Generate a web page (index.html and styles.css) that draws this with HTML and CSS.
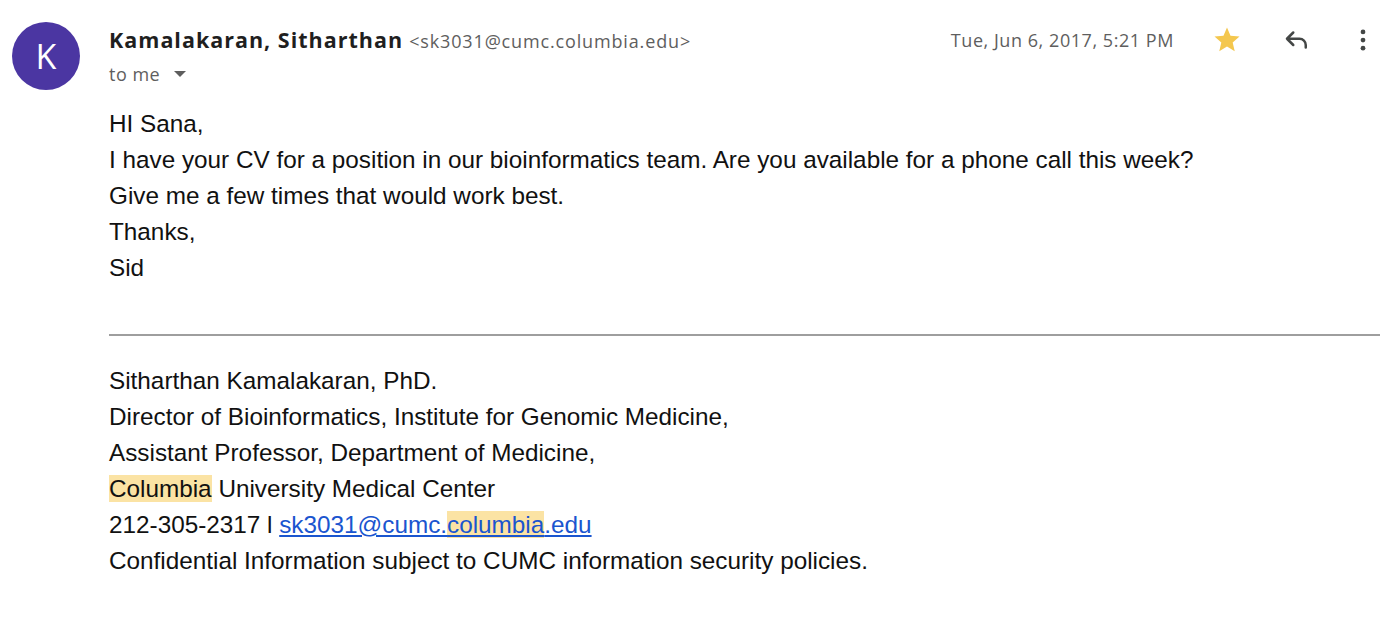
FILE: index.html
```html
<!DOCTYPE html>
<html>
<head>
<meta charset="utf-8">
<link rel="stylesheet" href="styles.css">
</head>
<body>
<div class="message">
  <div class="avatar">K</div>
  <div class="main">
    <div class="header">
      <div class="sender">
        <div class="from"><span class="name">Kamalakaran, Sitharthan</span> <span class="addr">&lt;sk3031@cumc.columbia.edu&gt;</span></div>
        <div class="to">to me <span class="caret"></span></div>
      </div>
      <div class="meta">
        <span class="date">Tue, Jun 6, 2017, 5:21 PM</span>
        <svg class="icon star" width="30" height="30" viewBox="0 0 24 24"><path fill="#f4c74e" d="M12 17.27L18.18 21l-1.64-7.03L22 9.24l-7.19-.61L12 2 9.19 8.63 2 9.24l5.46 4.73L5.82 21z"/></svg>
        <svg class="icon reply" width="30" height="30" viewBox="0 0 24 24"><path fill="none" stroke="#444746" stroke-width="2" stroke-linecap="round" stroke-linejoin="round" d="M9 6L4 11l5 5M4 11h10a5 5 0 0 1 5 5v2"/></svg>
        <svg class="icon more" width="30" height="30" viewBox="0 0 24 24"><circle cx="12" cy="5.5" r="1.9" fill="#444746"/><circle cx="12" cy="12" r="1.9" fill="#444746"/><circle cx="12" cy="18.5" r="1.9" fill="#444746"/></svg>
      </div>
    </div>
    <div class="body">
      <div>HI Sana,</div>
      <div>I have your CV for a position in our bioinformatics team. Are you available for a phone call this week?</div>
      <div>Give me a few times that would work best.</div>
      <div>Thanks,</div>
      <div>Sid</div>
      <hr class="rule">
      <div>Sitharthan Kamalakaran, PhD.</div>
      <div>Director of Bioinformatics, Institute for Genomic Medicine,</div>
      <div>Assistant Professor, Department of Medicine,</div>
      <div><span class="hl">Columbia</span> University Medical Center</div>
      <div>212-305-2317 l <a class="link" href="#">sk3031@cumc.<span class="hl">columbia</span>.edu</a></div>
      <div>Confidential Information subject to CUMC information security policies.</div>
    </div>
  </div>
</div>
</body>
</html>
```
FILE: styles.css
```css
html, body { margin: 0; padding: 0; background: #fff; }
body { width: 1394px; height: 628px; overflow: hidden; }
.message { display: flex; padding: 22px 0 0 12px; }
.avatar {
  width: 68px; height: 68px; border-radius: 50%;
  background: #4b36a2; color: #fff;
  display: flex; align-items: center; justify-content: center;
  font-family: "Open Sans", Roboto, sans-serif; font-size: 34px;
  flex: none;
}
.main { flex: 1; margin-left: 29px; margin-right: 14px; }
.header { display: flex; justify-content: space-between; align-items: flex-start; }
.from { font-family: "Open Sans", Roboto, sans-serif; line-height: 36px; height: 36px; white-space: nowrap; }
.name { font-size: 21.5px; font-weight: 700; color: #1f1f1f; letter-spacing: 1px; }
.addr { font-size: 18px; color: #5e5e5e; letter-spacing: 0.85px; margin-left: 2px; }
.to { font-family: "Open Sans", Roboto, sans-serif; font-size: 18px; color: #5e5e5e; line-height: 24px; display: flex; align-items: center; margin-top: 4px; letter-spacing: 0.5px; }
.caret { display: inline-block; width: 0; height: 0; border-left: 6px solid transparent; border-right: 6px solid transparent; border-top: 6px solid #5e5e5e; margin-left: 14px; }
.meta { display: flex; align-items: center; height: 36px; margin-right: 2px; }
.date { font-family: "Open Sans", Roboto, sans-serif; font-size: 18px; color: #5e5e5e; margin-right: 38px; letter-spacing: 0.55px; }
.icon { display: block; }
.star { margin-right: 40px; }
.reply { margin-right: 36px; }
.body { font-family: "Liberation Sans", Arial, sans-serif; font-size: 24.3px; color: #111; line-height: 36px; margin-top: 20px; }
.rule { border: none; border-top: 2px solid #9e9e9e; margin: 48px 0 27px 0; }
.hl { background: #fbe3a4; }
.link { color: #1a55cf; text-decoration: underline; }
```
